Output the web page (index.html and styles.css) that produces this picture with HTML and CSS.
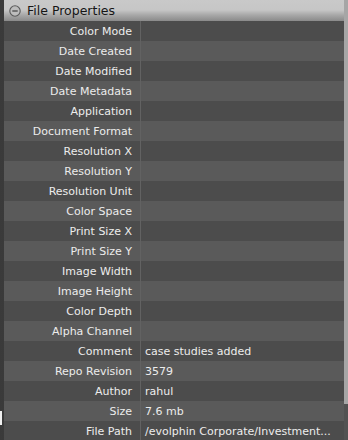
FILE: index.html
```html
<!DOCTYPE html>
<html lang="en">
<head>
    <meta charset="UTF-8">
    <title>File Properties</title>
    <link rel="stylesheet" href="styles.css">
</head>
<body>
    <div class="panel">
        <div class="edge"><span class="edge-mark"></span></div>
        <div class="main">
            <div class="header">
                <svg class="toggle" width="12" height="12" viewBox="0 0 12 12">
                    <circle cx="6" cy="6" r="5.2" fill="#bdbdbd" stroke="#5a5a5a" stroke-width="1.1"/>
                    <line x1="3.3" y1="6" x2="8.7" y2="6" stroke="#4a4a4a" stroke-width="1.3"/>
                </svg>
                <span class="title">File Properties</span>
            </div>
            <div class="props">
                <div class="row"><div class="label">Color Mode</div><div class="value"></div></div>
                <div class="row"><div class="label">Date Created</div><div class="value"></div></div>
                <div class="row"><div class="label">Date Modified</div><div class="value"></div></div>
                <div class="row"><div class="label">Date Metadata</div><div class="value"></div></div>
                <div class="row"><div class="label">Application</div><div class="value"></div></div>
                <div class="row"><div class="label">Document Format</div><div class="value"></div></div>
                <div class="row"><div class="label">Resolution X</div><div class="value"></div></div>
                <div class="row"><div class="label">Resolution Y</div><div class="value"></div></div>
                <div class="row"><div class="label">Resolution Unit</div><div class="value"></div></div>
                <div class="row"><div class="label">Color Space</div><div class="value"></div></div>
                <div class="row"><div class="label">Print Size X</div><div class="value"></div></div>
                <div class="row"><div class="label">Print Size Y</div><div class="value"></div></div>
                <div class="row"><div class="label">Image Width</div><div class="value"></div></div>
                <div class="row"><div class="label">Image Height</div><div class="value"></div></div>
                <div class="row"><div class="label">Color Depth</div><div class="value"></div></div>
                <div class="row"><div class="label">Alpha Channel</div><div class="value"></div></div>
                <div class="row"><div class="label">Comment</div><div class="value">case studies added</div></div>
                <div class="row"><div class="label">Repo Revision</div><div class="value">3579</div></div>
                <div class="row"><div class="label">Author</div><div class="value">rahul</div></div>
                <div class="row"><div class="label">Size</div><div class="value">7.6 mb</div></div>
                <div class="row"><div class="label">File Path</div><div class="value">/evolphin Corporate/Investment...</div></div>
            </div>
        </div>
        <div class="scrollbar"><div class="thumb"></div></div>
    </div>
</body>
</html>
```

FILE: styles.css
```css
body {
    margin: 0;
    background: #3a3a3a;
    font-family: "DejaVu Sans", Verdana, sans-serif;
    overflow: hidden;
}
.panel {
    display: flex;
    width: 348px;
    height: 440px;
    overflow: hidden;
}
.edge {
    position: relative;
    width: 4px;
    flex: none;
    background-color: #2c2c2c;
    background-image: radial-gradient(#4a4a4a 0.6px, transparent 0.8px);
    background-size: 2px 2px;
}
.edge-mark {
    position: absolute;
    left: 0;
    top: 411px;
    width: 2px;
    height: 14px;
    background: #f0f0f0;
}
.main {
    flex: 1;
    min-width: 0;
}
.header {
    display: flex;
    align-items: center;
    gap: 6px;
    height: 21px;
    padding-left: 5px;
    background: linear-gradient(to bottom, #c9c9c9 0, #c6c6c6 10px, #a8a8a8 15px, #8a8a8a 21px);
}
.toggle {
    flex: none;
}
.title {
    font-size: 12.5px;
    color: #151515;
}
.props {
    display: flex;
    flex-direction: column;
}
.row {
    display: flex;
    height: 20px;
    line-height: 22px;
    font-size: 11px;
    color: #ececec;
    background: #4c4c4c;
}
.row:nth-child(even) {
    background: #5a5a5a;
}
.label {
    width: 128px;
    height: 20px;
    flex: none;
    padding-right: 8px;
    text-align: right;
    border-right: 1px solid #626262;
}
.value {
    flex: 1;
    min-width: 0;
    height: 20px;
    padding-left: 4px;
    padding-right: 4px;
    white-space: nowrap;
    overflow: hidden;
}
.scrollbar {
    width: 4px;
    flex: none;
    background: #525252;
}
.thumb {
    height: 404px;
    background: #a6a6a6;
}
```
